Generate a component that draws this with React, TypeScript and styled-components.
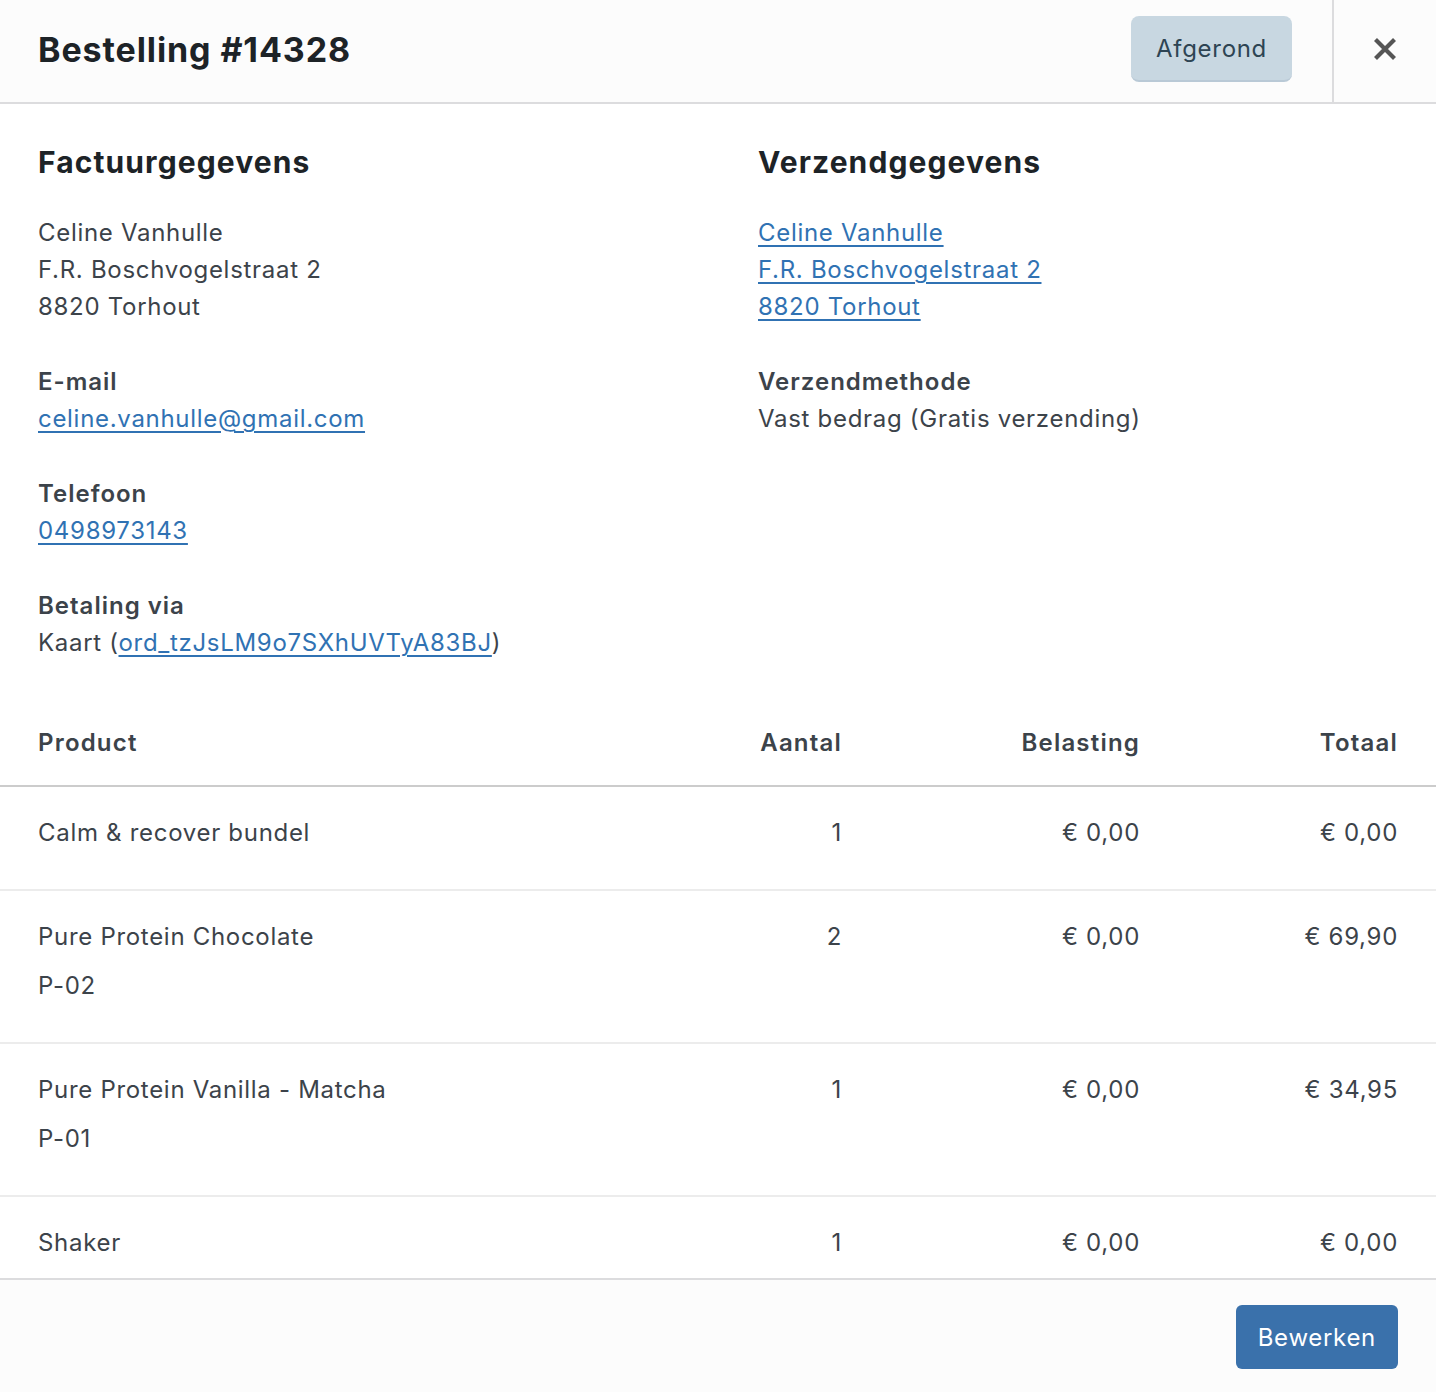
import React from "react";
import styled, { createGlobalStyle } from "styled-components";

const Global = createGlobalStyle`
  html, body { margin: 0; padding: 0; height: 100%; }
  body { background: #fff; font-family: Inter, "Noto Sans", "Liberation Sans", sans-serif; color: #3c434a; }
  #root { height: 100%; }
  * { box-sizing: border-box; }
`;

const Modal = styled.div`
  display: flex;
  flex-direction: column;
  width: 1436px;
  height: 1392px;
  background: #fff;
`;

const Header = styled.header`
  display: flex;
  align-items: stretch;
  height: 104px;
  flex: none;
  background: #fcfcfc;
  border-bottom: 2px solid #dcdcde;
`;

const Title = styled.h1`
  flex: 1;
  margin: 0;
  padding-left: 38px;
  padding-bottom: 4px;
  display: flex;
  align-items: center;
  font-size: 34px;
  font-weight: 700;
  color: #1d2327;
  letter-spacing: 0.9px;
`;

const StatusWrap = styled.div`
  display: flex;
  align-items: center;
  padding-right: 40px;
  padding-bottom: 4px;
`;

const Status = styled.span`
  display: inline-flex;
  align-items: center;
  height: 66px;
  padding: 0 25px;
  border-radius: 8px;
  background: #c8d7e1;
  border-bottom: 2px solid #b9c9d6;
  color: #2e4453;
  font-size: 24px;
  letter-spacing: 0.7px;
`;

const Close = styled.button`
  width: 104px;
  border: 0;
  border-left: 2px solid #dcdcde;
  background: transparent;
  display: flex;
  align-items: center;
  justify-content: center;
  padding: 0 0 4px;
  cursor: pointer;
`;

const Body = styled.div`
  flex: 1;
  overflow: hidden;
`;

const Addresses = styled.div`
  display: grid;
  grid-template-columns: 720px 1fr;
  padding: 40px 38px 0;
`;

const Column = styled.div`
  display: flex;
  flex-direction: column;
`;

const SectionTitle = styled.h2`
  margin: 0 0 34px;
  font-size: 30px;
  line-height: 36px;
  font-weight: 700;
  color: #1d2327;
  letter-spacing: 1.1px;
`;

const Block = styled.div<{ $gap?: boolean }>`
  font-size: 24px;
  line-height: 37px;
  letter-spacing: 0.7px;
  margin-top: ${(p) => (p.$gap ? "38px" : "0")};
`;

const Label = styled.div`
  font-weight: 600;
  letter-spacing: 1px;
`;

const Link = styled.a`
  color: #3072b3;
  text-decoration: underline;
  text-decoration-thickness: 2px;
  text-underline-offset: 4px;
`;

const Table = styled.div`
  margin-top: 37px;
`;

const Row = styled.div<{ $head?: boolean }>`
  display: grid;
  grid-template-columns: 1fr 150px 298px 258px;
  padding: ${(p) => (p.$head ? "26px 38px 24px" : "27px 38px 38px")};
  border-bottom: 2px solid ${(p) => (p.$head ? "#cccccc" : "#ececec")};
  font-size: 24px;
  line-height: 37px;
  font-weight: ${(p) => (p.$head ? 600 : 400)};
  letter-spacing: ${(p) => (p.$head ? "1.2px" : "0.7px")};
`;

const Cell = styled.div<{ $right?: boolean }>`
  text-align: ${(p) => (p.$right ? "right" : "left")};
`;

const Sku = styled.div`
  margin-top: 12px;
`;

const Footer = styled.footer`
  flex: none;
  display: flex;
  justify-content: flex-end;
  align-items: center;
  height: 114px;
  padding: 2px 38px 0;
  background: #fcfcfc;
  border-top: 2px solid #dcdcde;
`;

const Button = styled.button`
  height: 64px;
  padding: 0 22px;
  border: 0;
  border-radius: 6px;
  background: #3a71ab;
  color: #fff;
  font-family: inherit;
  font-size: 24px;
  letter-spacing: 0.7px;
  cursor: pointer;
`;

const items = [
  { name: "Calm & recover bundel", qty: 1, tax: "€ 0,00", total: "€ 0,00" },
  { name: "Pure Protein Chocolate", sku: "P-02", qty: 2, tax: "€ 0,00", total: "€ 69,90" },
  { name: "Pure Protein Vanilla - Matcha", sku: "P-01", qty: 1, tax: "€ 0,00", total: "€ 34,95" },
  { name: "Shaker", qty: 1, tax: "€ 0,00", total: "€ 0,00" },
];

export default function App() {
  return (
    <>
      <Global />
      <Modal>
        <Header>
          <Title>Bestelling #14328</Title>
          <StatusWrap>
            <Status>Afgerond</Status>
          </StatusWrap>
          <Close aria-label="Sluiten">
            <svg width="24" height="24" viewBox="0 0 24 24">
              <path d="M2.5 2.5 L21.5 21.5 M21.5 2.5 L2.5 21.5" stroke="#555" strokeWidth="4.2" />
            </svg>
          </Close>
        </Header>
        <Body>
          <Addresses>
            <Column>
              <SectionTitle>Factuurgegevens</SectionTitle>
              <Block>
                Celine Vanhulle
                <br />
                F.R. Boschvogelstraat 2
                <br />
                8820 Torhout
              </Block>
              <Block $gap>
                <Label>E-mail</Label>
                <Link href="#">celine.vanhulle@gmail.com</Link>
              </Block>
              <Block $gap>
                <Label>Telefoon</Label>
                <Link href="#">0498973143</Link>
              </Block>
              <Block $gap>
                <Label>Betaling via</Label>
                Kaart (<Link href="#">ord_tzJsLM9o7SXhUVTyA83BJ</Link>)
              </Block>
            </Column>
            <Column>
              <SectionTitle>Verzendgegevens</SectionTitle>
              <Block>
                <Link href="#">
                  Celine Vanhulle
                  <br />
                  F.R. Boschvogelstraat 2
                  <br />
                  8820 Torhout
                </Link>
              </Block>
              <Block $gap>
                <Label>Verzendmethode</Label>
                Vast bedrag (Gratis verzending)
              </Block>
            </Column>
          </Addresses>
          <Table>
            <Row $head>
              <Cell>Product</Cell>
              <Cell $right>Aantal</Cell>
              <Cell $right>Belasting</Cell>
              <Cell $right>Totaal</Cell>
            </Row>
            {items.map((it) => (
              <Row key={it.name}>
                <Cell>
                  {it.name}
                  {it.sku && <Sku>{it.sku}</Sku>}
                </Cell>
                <Cell $right>{it.qty}</Cell>
                <Cell $right>{it.tax}</Cell>
                <Cell $right>{it.total}</Cell>
              </Row>
            ))}
          </Table>
        </Body>
        <Footer>
          <Button>Bewerken</Button>
        </Footer>
      </Modal>
    </>
  );
}
